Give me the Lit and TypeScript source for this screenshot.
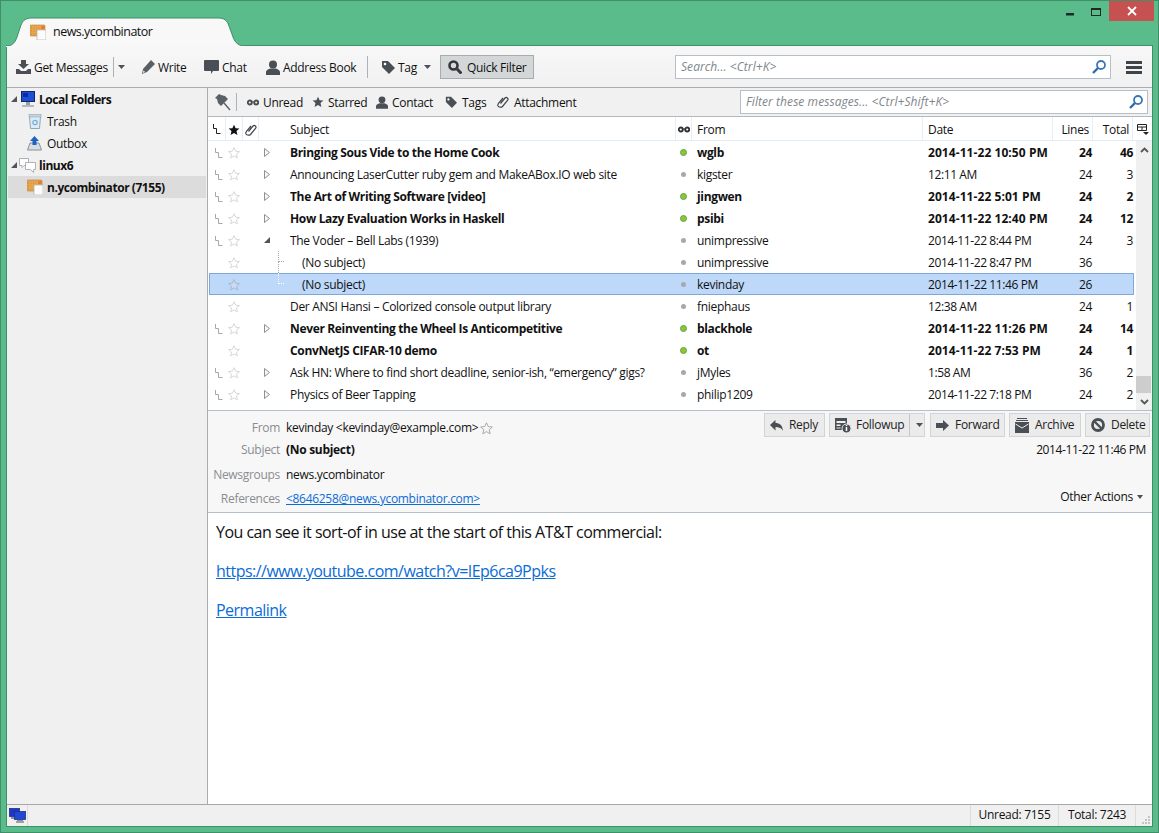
import { LitElement, html, css, svg } from "lit";
import { customElement } from "lit/decorators.js";

const G = "#4a4f55";
const I = (w: number, h: number, body: unknown, cls = "") =>
  html`<svg class="ic ${cls}" width=${w} height=${h} viewBox="0 0 ${w} ${h}">${body}</svg>`;

const icons = {
  download: () => I(15, 14, svg`<path fill=${G} d="M5 0h5v4h3L7.5 9 2 4h3z"/><path fill=${G} d="M0 9h3l2 2h5l2-2h3v5H0z"/>`),
  pencil: () => I(14, 15, svg`<path fill="#5a5f66" d="M10 0l4 4-8 8-5 2 1-5z"/><path fill="#fff" d="M2.5 10.5l1.500 1.500-2 1z"/>`),
  chat: () => I(15, 15, svg`<path fill=${G} d="M1 0h13a1 1 0 0 1 1 1v9a1 1 0 0 1-1 1H9l-2 3v-3H1a1 1 0 0 1-1-1V1a1 1 0 0 1 1-1z"/>`),
  person: (s = 14) => I(s, s + 1, svg`<g transform="scale(${s / 14})"><circle cx="7" cy="4.500" r="4" fill=${G}/><path fill=${G} d="M0 15v-3c0-2 3-3 4-3.500h6c1 .5 4 1.500 4 3.500v3z"/></g>`),
  tag: (s = 14) => I(s, s, svg`<g transform="scale(${s / 14})"><path fill=${G} d="M1 1h6l7 7-6 6-7-7z"/><circle cx="4" cy="4" r="1.300" fill="#fff"/></g>`),
  lens: () => I(14, 14, svg`<circle cx="5.500" cy="5.500" r="4" fill="#d8d8d8" stroke="#33373c" stroke-width="2.600"/><path d="M9 9l4.500 4.500" stroke="#33373c" stroke-width="3"/>`),
  blueLens: () => I(14, 14, svg`<circle cx="9" cy="5" r="4" fill="none" stroke="#3a78b8" stroke-width="1.800"/><path d="M6 8L1 13" stroke="#2f6cab" stroke-width="2.400"/>`),
  menu: () => I(16, 13, svg`<path fill="#3f444a" d="M0 0h16v3H0zM0 5h16v3H0zM0 10h16v3H0z"/>`),
  pin: () => I(16, 17, svg`<path fill="#5b6066" d="M4 0L0 4l2 1 1 4 3 3 7-7-3-3-4-1z"/><path d="M9 9l6 7" stroke="#5b6066" stroke-width="1.400"/>`),
  glasses: (c = "#4a4f55") => I(12, 7, svg`<circle cx="2.800" cy="3.500" r="2" fill="none" stroke=${c} stroke-width="1.900"/><circle cx="9.200" cy="3.500" r="2" fill="none" stroke=${c} stroke-width="1.900"/><path d="M4.500 3h3" stroke=${c}/>`),
  star: (s = 12, f = G, st = "none") => I(s, s, svg`<g transform="scale(${s / 12})"><path fill=${f} stroke=${st} stroke-width=".9" d="M6 .7l1.600 3.500 3.800.4-2.900 2.500.9 3.800L6 8.900l-3.400 2 .9-3.800L.6 4.600l3.800-.4z"/></g>`),
  clip: (s = 12) => I(s, s, svg`<g transform="scale(${s / 12})"><path fill="none" stroke="#3f444a" stroke-width="1.200" d="M3.500 7.500l4.500-5.500c1.500-1.500 4 .5 2.500 2.500l-5 6c-1 1-3.500 1-4.500-.5-.6-1 0-2 .5-2.700L6 2"/></g>`),
  thread: (c = "#a4a8ac") => I(9, 11, svg`<path fill="none" stroke=${c} d="M1.500 0v4.500h3v5h4"/>`),
  twistyOpen: () => I(6, 6, svg`<path fill="#50545a" d="M6 0v6H0z"/>`),
  twistyClosed: () => I(6, 9, svg`<path fill="#f6f6f6" stroke="#8d9196" d="M.5.5l5 4-5 4z"/>`),
  caret: () => I(7, 4, svg`<path fill="#4d5157" d="M0 0h7L3.500 4z"/>`),
  smallCaret: () => I(6, 4, svg`<path fill="#4d5157" d="M0 0h6L3 4z"/>`),
  localFolders: () => I(16, 17, svg`<rect x="1" y="0" width="14" height="11" fill="#16246a"/><rect x="2" y="1" width="12" height="9" fill="#1d4fd6"/><path fill="#0c2aa0" d="M3 2h5v4H3z"/><rect x="6" y="11" width="4" height="3" fill="#9aa0a4"/><rect x="2" y="14" width="12" height="2" fill="#b6babd"/>`),
  trash: () => I(14, 15, svg`<path fill="#dcebf4" stroke="#8fa8b8" d="M1.500 2.500h11l-1 12h-9z"/><rect x="1" y="0.500" width="12" height="2.500" fill="#c4d4de" stroke="#94a8b4" stroke-width=".6"/><circle cx="7" cy="8.500" r="2.200" fill="none" stroke="#6fb2dc" stroke-width="1.200"/>`),
  outbox: () => I(15, 15, svg`<path fill="#d8dde2" stroke="#8a9098" d="M3 7h9l2.500 7H.5z"/><path fill="#1d64c0" d="M7.500 0L12 5H9.500v4h-4V5H3z"/>`),
  news: () => I(16, 16, svg`<rect x="0" y="1" width="15" height="11" rx="1" fill="#e6a64f" stroke="#b9812f" stroke-width=".6"/><path stroke="#c8862f" stroke-width=".8" stroke-dasharray="1 1.500" d="M1 4h13M1 7h13M1 10h9"/><rect x="7" y="6" width="9" height="10" fill="#fbfbfb" stroke="#b6b6b6" stroke-width=".7"/><circle cx="13" cy="3.500" r="1.800" fill="#f0762a"/>`),
  bubbles: () => I(17, 15, svg`<path fill="#fff" stroke="#aeb2b6" d="M.5.5h9v7H5l-2 2v-2H.5z"/><path fill="#fff" stroke="#aeb2b6" d="M6.500 4.500h10v7h-2v3l-3-3h-5z"/>`),
  network: () => I(17, 15, svg`<rect x="0.500" y="0.500" width="10" height="8" fill="#1a38c8" stroke="#223080" stroke-width=".8"/><rect x="2" y="9" width="5" height="2" fill="#8c9094"/><rect x="5.500" y="3.500" width="11" height="8" fill="#1f47d8" stroke="#223080" stroke-width=".8"/><rect x="8" y="12" width="6" height="1" fill="#8c9094"/><rect x="7" y="13" width="8" height="2" fill="#9da1a5"/>`),
  pickColumn: () => I(12, 11, svg`<path fill="none" stroke="#222" d="M.5.5h9v6H.5zM.5 3h9M5 3v3.500"/><path fill="#222" d="M6 8h6l-3 3z"/>`),
  reply: () => I(13, 11, svg`<path fill=${G} d="M5.500 0v3c4 0 7 2 7.500 8-1.500-3-4-4-7.500-4v3.500L0 5z"/>`),
  followup: () => I(16, 15, svg`<path fill=${G} d="M0 0h12v12H0z"/><path fill="#eee" d="M1.500 3h9v2h-9zM1.500 6.500h4v1.500h-4zM1.500 9.500h4v1h-4z"/><circle cx="11.500" cy="10.500" r="4.500" fill=${G} stroke="#eee"/><path stroke="#fff" stroke-width="1.500" d="M11.500 9v4M11.500 7v1"/>`),
  forward: () => I(13, 11, svg`<path fill=${G} d="M7 0l6 5.500-6 5.500V8H0V3h7z"/>`),
  archive: () => I(14, 15, svg`<path fill=${G} d="M2 0h10v1H2zM1 2h12v1H1zM0 4h14v11H0z"/><path fill="none" stroke="#eee" d="M.5 6L7 10l6.500-4"/>`),
  del: () => I(14, 14, svg`<circle cx="7" cy="7" r="5.500" fill="none" stroke=${G} stroke-width="2.800"/><path d="M3 3l8 8" stroke=${G} stroke-width="2.400"/>`),
  grip: () => I(9, 9, svg`<path fill="#c4c4c4" d="M6 0h2v2H6zM3 3h2v2H3zM6 3h2v2H6zM0 6h2v2H0zM3 6h2v2H3zM6 6h2v2H6z"/>`),
};

interface Row { s: string; f: string; d: string; l: string; t: string; b?: boolean; tw?: "c" | "o"; child?: boolean; sel?: boolean; cont?: boolean; noThread?: boolean; }
const rows: Row[] = [
  { s: "Bringing Sous Vide to the Home Cook", f: "wglb", d: "2014-11-22 10:50 PM", l: "24", t: "46", b: true, tw: "c" },
  { s: "Announcing LaserCutter ruby gem and MakeABox.IO web site", f: "kigster", d: "12:11 AM", l: "24", t: "3", tw: "c" },
  { s: "The Art of Writing Software [video]", f: "jingwen", d: "2014-11-22 5:01 PM", l: "24", t: "2", b: true, tw: "c" },
  { s: "How Lazy Evaluation Works in Haskell", f: "psibi", d: "2014-11-22 12:40 PM", l: "24", t: "12", b: true, tw: "c" },
  { s: "The Voder – Bell Labs (1939)", f: "unimpressive", d: "2014-11-22 8:44 PM", l: "24", t: "3", tw: "o" },
  { s: "(No subject)", f: "unimpressive", d: "2014-11-22 8:47 PM", l: "36", t: "", child: true, cont: true, noThread: true },
  { s: "(No subject)", f: "kevinday", d: "2014-11-22 11:46 PM", l: "26", t: "", child: true, sel: true, noThread: true },
  { s: "Der ANSI Hansi – Colorized console output library", f: "fniephaus", d: "12:38 AM", l: "24", t: "1", noThread: true },
  { s: "Never Reinventing the Wheel Is Anticompetitive", f: "blackhole", d: "2014-11-22 11:26 PM", l: "24", t: "14", b: true, tw: "c" },
  { s: "ConvNetJS CIFAR-10 demo", f: "ot", d: "2014-11-22 7:53 PM", l: "24", t: "1", b: true, noThread: true },
  { s: "Ask HN: Where to find short deadline, senior-ish, “emergency” gigs?", f: "jMyles", d: "1:58 AM", l: "36", t: "2", tw: "c" },
  { s: "Physics of Beer Tapping", f: "philip1209", d: "2014-11-22 7:18 PM", l: "24", t: "2", tw: "c" },
];

@customElement("app-root")
export class AppRoot extends LitElement {
  static styles = css`
    :host { display: block; width: 1159px; height: 833px; overflow: hidden; font: 12px/16px "Open Sans", "Noto Sans", sans-serif; letter-spacing: -0.3px; color: #111; }
    * { box-sizing: border-box; }
    .ic { display: block; flex: none; }
    .win { width: 1159px; height: 833px; background: #5abb8b; border: 1px solid #3f9069; display: flex; flex-direction: column; padding: 0 5px 5px 5px; }
    .title { height: 44px; display: flex; align-items: flex-start; flex: none; position: relative; z-index: 1; }
    .tabwrap { position: relative; width: 240px; height: 30px; margin-top: 16px; display: flex; align-items: center; flex: none; }
    .tabshape { position: absolute; left: 0; top: 0; }
    .tabc { position: relative; display: flex; align-items: center; gap: 7px; padding-left: 24px; font-size: 12.500px; letter-spacing: -0.5px; }
    .ctrls { margin-left: auto; display: flex; align-items: flex-start; margin-right: -1px; }
    .ctrl { width: 27px; height: 20px; display: flex; align-items: center; justify-content: center; }
    .ctrl.m { width: 26px; }
    .ctrl.x { background: #c75050; width: 45px; }
    .client { flex: 1; min-height: 0; border: 1px solid #3f9069; display: flex; flex-direction: column; background: #f0f0f0; }
    .tb { height: 42px; flex: none; display: flex; align-items: center; background: linear-gradient(#f7f7f7, #f1f1f1); border-bottom: 1px solid #a9adb1; padding: 1px 0 0 9px; }
    .btn { display: flex; align-items: center; gap: 3px; flex: none; white-space: nowrap; }
    .btn span { padding-top: 2px; }
    .b-get { width: 90px; }
    .vsep { width: 1px; height: 22px; background: #aeb2b6; flex: none; }
    .s1 { margin-left: 7px; height: 20px; }
    .c1 { margin-left: 4px; }
    .b-write { margin-left: 16px; width: 45px; }
    .b-chat { margin-left: 18px; width: 43px; }
    .b-addr { margin-left: 19px; width: 89px; }
    .s2 { margin-left: 12px; height: 22px; }
    .b-tag { margin-left: 13px; width: 37px; }
    .c2 { margin-left: 6px; }
    .qf { height: 24px; width: 94px; margin-left: 9px; padding-left: 7px; background: #d4d7d8; border: 1px solid #a9acae; gap: 5px; }
    .search { height: 24px; background: #fff; border: 1px solid #b6bfc7; display: flex; align-items: center; padding: 0 4px 0 5px; color: #80868c; font-style: italic; justify-content: space-between; flex: none; letter-spacing: 0.07px; }
    .s-main { width: 436px; margin-left: 141px; }
    .b-menu { margin-left: 15px; }
    .main { flex: 1; min-height: 0; display: flex; }
    .side { width: 201px; flex: none; background: #f0f0f0; border-right: 1px solid #a9adb1; }
    .fr { height: 22px; display: flex; align-items: center; padding-left: 4px; }
    .fr span { padding-top: 2px; }
    .fr.b { font-weight: 700; letter-spacing: -0.45px; }
    .fr.top { gap: 3px; }
    .fr.ln { gap: 2px; }
    .fr.ln span { margin-left: 1px; }
    .fr.child { padding-left: 21px; gap: 5px; }
    .fr.ob { padding-left: 20px; }
    .fr.sel { background: #dcdcdc; margin: 0 1px; padding-left: 19px; gap: 4px; }
    .right { flex: 1; min-width: 0; display: flex; flex-direction: column; }
    .qb { height: 29px; flex: none; display: flex; align-items: center; background: #f1f1f1; border-bottom: 1px solid #b5b9bd; padding-left: 7px; }
    .qsep { margin-left: 5px; margin-right: -1px; height: 18px; }
    .qi { display: flex; align-items: center; gap: 4px; margin-left: 11px; flex: none; white-space: nowrap; }
    .qi span { padding-top: 2px; }
    .q1 { width: 54px; }
    .q2 { width: 53px; }
    .q3 { width: 58px; }
    .q4 { width: 41px; }
    .q4 span { margin-left: 1px; }
    .q5 { width: 79px; }
    .q5 span { margin-left: 1px; }
    .qs { width: 408px; margin-left: auto; margin-right: 4px; }
    .list { height: 294px; flex: none; background: #fff; border-bottom: 1px solid #b5bfcc; position: relative; }
    .head { height: 24px; border-bottom: 1px solid #e2ecf7; display: grid; grid-template-columns: 18px 17px 16px 417px 16px 231px 130px 40px 40px 19px; }
    .head > div { display: flex; align-items: center; border-right: 1px solid #e6eef8; padding-top: 2px; min-width: 0; }
    .head > div:last-child { border-right: 0; }
    .hc { justify-content: center; }
    .hs { padding-left: 31px; }
    .ht { padding-left: 5px; }
    .hr { justify-content: flex-end; padding-right: 3px; }
    .row { height: 22px; width: 925px; margin-left: 1px; align-items: stretch; display: grid; grid-template-columns: 17px 17px 16px 417px 16px 231px 130px 40px 41px; }
    .row > div { display: flex; align-items: center; min-width: 0; white-space: nowrap; padding-top: 2px; }
    .row.b { font-weight: 700; letter-spacing: -0.34px; }
    .row.sel { background: #bdd8f8; box-shadow: inset 0 0 0 1px #7fa8d8; }
    .row > .c-thread { padding-left: 5px; }
    .row > .c-star { padding-left: 2px; }
    .c-sub { position: relative; padding-left: 31px; }
    .c-sub.child { padding-left: 43px; }
    .twc { position: absolute; left: 5px; top: 0; bottom: 0; width: 7px; display: flex; align-items: center; }
    .tree { position: absolute; left: 19px; top: 0; width: 6px; height: 11px; border-left: 1px dotted #a8a8a8; border-bottom: 1px dotted #a8a8a8; }
    .tree.cont::after { content: ""; position: absolute; left: -1px; top: 11px; height: 11px; border-left: 1px dotted #a8a8a8; }
    .row.sel .tree { border-color: #fff; }
    .c-from { padding-left: 5px; }
    .c-date { padding-left: 5px; letter-spacing: -0.4px; }
    .row.b .c-date { letter-spacing: 0.07px; }
    .dot { width: 5px; height: 5px; border-radius: 50%; background: #a6a9ac; margin-left: 5px; margin-bottom: 2px; }
    .row.b .dot { width: 7px; height: 7px; margin-left: 4px; background: #8bc53f; border: 1px solid #6aa42c; }
    .c-num { justify-content: flex-end; padding-right: 1px; }
    .sb { position: absolute; right: 0; top: 24px; width: 16px; bottom: 0; background: #f0f0f0; display: flex; flex-direction: column; align-items: center; }
    .sb .ar { height: 17px; display: flex; align-items: center; justify-content: center; flex: none; }
    .sb .sp { flex: 1; }
    .sb .th { width: 15px; height: 17px; background: #cdcdcd; flex: none; margin-right: 1px; }
    .hdr { height: 102px; flex: none; background: #f7f7f7; border-bottom: 1px solid #b5bfcc; display: flex; justify-content: space-between; }
    .grid { display: grid; grid-template-columns: 72px auto; grid-template-rows: 22px 22px 28px 20px; column-gap: 6px; padding-top: 6px; align-content: start; }
    .lb { display: flex; align-items: center; justify-content: flex-end; color: #8a8d90; }
    .vl { display: flex; align-items: center; gap: 2px; white-space: nowrap; }
    .link { color: #0a6cd6; text-decoration: underline; }
    .hd-r { display: flex; flex-direction: column; align-items: flex-end; padding: 2px 2px 0 0; }
    .acts { display: flex; gap: 4px; flex: none; }
    .act { height: 24px; display: flex; align-items: center; gap: 6px; background: #ebebeb; border: 1px solid #d2d4d6; color: #222; padding: 0 0 0 5px; flex: none; white-space: nowrap; }
    .a1 { width: 61px; }
    .a2 { width: 96px; gap: 5px; }
    .a3 { width: 75px; margin-left: 1px; }
    .a4 { width: 72px; }
    .a5 { width: 65px; }
    .act .mid { width: 1px; height: 22px; background: #c4c6c8; flex: none; margin-left: 0; margin-right: 1px; }
    .hdate { margin-top: 5px; padding-right: 4px; flex: none; letter-spacing: -0.4px; }
    .other { margin-top: 31px; padding-right: 7px; display: flex; align-items: center; gap: 4px; flex: none; }
    .body { flex: 1; min-height: 0; background: #fff; padding: 9px 8px; font-size: 16px; line-height: 21px; letter-spacing: -0.52px; }
    .body p { margin: 0 0 18px; }
    .st { height: 22px; flex: none; display: flex; align-items: stretch; background: #f0f0f0; border-top: 1px solid #a8a8a8; }
    .st > div { display: flex; align-items: center; }
    .st .a { width: 21px; padding-left: 2px; border-right: 1px solid #dcdcdc; }
    .st .f { flex: 1; border-right: 1px solid #dcdcdc; }
    .st .u { width: 88px; justify-content: center; border-right: 1px solid #dcdcdc; padding-bottom: 2px; }
    .st .tt { width: 77px; justify-content: center; border-right: 1px solid #dcdcdc; padding-bottom: 2px; }
    .st .g { width: 16px; align-items: flex-end; justify-content: flex-end; padding: 0 1px 1px 0; }
  `;

  private row(r: Row) {
    const star = r.sel ? icons.star(12, "#c9dcf4", "#a6b6c8") : icons.star(12, "#fff", "#d2d2d2");
    return html`<div class="row ${r.b ? "b" : ""} ${r.sel ? "sel" : ""}">
      <div class="c-thread">${r.noThread ? "" : icons.thread()}</div>
      <div class="c-star">${star}</div>
      <div></div>
      <div class="c-sub ${r.child ? "child" : ""}">
        ${r.tw ? html`<span class="twc">${r.tw === "c" ? icons.twistyClosed() : icons.twistyOpen()}</span>` : ""}
        ${r.child ? html`<span class="tree ${r.cont ? "cont" : ""}"></span>` : ""}
        ${r.s}
      </div>
      <div><span class="dot"></span></div>
      <div class="c-from">${r.f}</div>
      <div class="c-date">${r.d}</div>
      <div class="c-num">${r.l}</div>
      <div class="c-num">${r.t}</div>
    </div>`;
  }

  render() {
    return html`<div class="win">
      <div class="title">
        <div class="tabwrap">
          <svg class="tabshape" width="240" height="30" viewBox="0 0 240 30"><path d="M0 29C6 29 9 26 11 20L15 8C17 3 20 1 26 1H212C218 1 221 3 223 9L227 20C229 26 233 29 239 29" fill="#f8f8f8" stroke="#3f9069"/><rect x="0" y="29" width="240" height="1" fill="#f7f7f7"/></svg>
          <div class="tabc">${icons.news()}<span>news.ycombinator</span></div>
        </div>
        <div class="ctrls">
          <div class="ctrl"><svg class="ic" width="10" height="10" viewBox="0 0 10 10"><rect x="1" y="7" width="8" height="2.500" fill="#1d2a26"/></svg></div>
          <div class="ctrl m"><svg class="ic" width="10" height="10" viewBox="0 0 10 10"><rect x=".5" y="2.500" width="9" height="7" fill="none" stroke="#1d2a26"/><rect x="0" y="2" width="10" height="2" fill="#1d2a26"/></svg></div>
          <div class="ctrl x"><svg class="ic" width="10" height="10" viewBox="0 0 10 10"><path d="M1 1l8 8M9 1L1 9" stroke="#fff" stroke-width="1.800"/></svg></div>
        </div>
      </div>
      <div class="client">
        <div class="tb">
          <div class="btn b-get">${icons.download()}<span>Get Messages</span></div>
          <div class="vsep s1"></div>
          <div class="btn c1">${icons.caret()}</div>
          <div class="btn b-write">${icons.pencil()}<span>Write</span></div>
          <div class="btn b-chat">${icons.chat()}<span>Chat</span></div>
          <div class="btn b-addr">${icons.person()}<span>Address Book</span></div>
          <div class="vsep s2"></div>
          <div class="btn b-tag">${icons.tag()}<span>Tag</span></div>
          <div class="btn c2">${icons.caret()}</div>
          <div class="btn qf">${icons.lens()}<span>Quick Filter</span></div>
          <div class="search s-main"><span>Search... &lt;Ctrl+K&gt;</span>${icons.blueLens()}</div>
          <div class="b-menu">${icons.menu()}</div>
        </div>
        <div class="main">
          <div class="side">
            <div class="fr b top">${icons.twistyOpen()}${icons.localFolders()}<span>Local Folders</span></div>
            <div class="fr child">${icons.trash()}<span>Trash</span></div>
            <div class="fr child ob">${icons.outbox()}<span>Outbox</span></div>
            <div class="fr b top ln">${icons.twistyOpen()}${icons.bubbles()}<span>linux6</span></div>
            <div class="fr sel b">${icons.news()}<span>n.ycombinator (7155)</span></div>
          </div>
          <div class="right">
            <div class="qb">
              ${icons.pin()}
              <div class="vsep qsep"></div>
              <div class="qi q1">${icons.glasses()}<span>Unread</span></div>
              <div class="qi q2">${icons.star(12)}<span>Starred</span></div>
              <div class="qi q3">${icons.person(12)}<span>Contact</span></div>
              <div class="qi q4">${icons.tag(12)}<span>Tags</span></div>
              <div class="qi q5">${icons.clip()}<span>Attachment</span></div>
              <div class="search qs"><span>Filter these messages... &lt;Ctrl+Shift+K&gt;</span>${icons.blueLens()}</div>
            </div>
            <div class="list">
              <div class="head">
                <div class="hc">${icons.thread("#222")}</div>
                <div class="hc">${icons.star(12, "#111")}</div>
                <div class="hc">${icons.clip()}</div>
                <div class="hs">Subject</div>
                <div class="hc">${icons.glasses("#333")}</div>
                <div class="ht">From</div>
                <div class="ht">Date</div>
                <div class="hr">Lines</div>
                <div class="hr">Total</div>
                <div class="hc">${icons.pickColumn()}</div>
              </div>
              ${rows.map((r) => this.row(r))}
              <div class="sb">
                <div class="ar"><svg class="ic" width="9" height="6" viewBox="0 0 9 6"><path d="M1 5l3.500-3.500L8 5" fill="none" stroke="#555" stroke-width="1.800"/></svg></div>
                <div class="sp"></div>
                <div class="th"></div>
                <div class="ar"><svg class="ic" width="9" height="6" viewBox="0 0 9 6"><path d="M1 1l3.500 3.500L8 1" fill="none" stroke="#555" stroke-width="1.800"/></svg></div>
              </div>
            </div>
            <div class="hdr">
              <div class="grid">
                <div class="lb">From</div><div class="vl">kevinday &lt;kevinday@example.com&gt;${icons.star(13, "#f7f7f7", "#a8a8a8")}</div>
                <div class="lb">Subject</div><div class="vl"><b>(No subject)</b></div>
                <div class="lb">Newsgroups</div><div class="vl">news.ycombinator</div>
                <div class="lb">References</div><div class="vl"><a class="link" href="#">&lt;8646258@news.ycombinator.com&gt;</a></div>
              </div>
              <div class="hd-r">
                <div class="acts">
                  <div class="act a1">${icons.reply()}<span>Reply</span></div>
                  <div class="act a2">${icons.followup()}<span>Followup</span><span class="mid"></span>${icons.caret()}</div>
                  <div class="act a3">${icons.forward()}<span>Forward</span></div>
                  <div class="act a4">${icons.archive()}<span>Archive</span></div>
                  <div class="act a5">${icons.del()}<span>Delete</span></div>
                </div>
                <div class="hdate">2014-11-22 11:46 PM</div>
                <div class="other"><span>Other Actions</span>${icons.smallCaret()}</div>
              </div>
            </div>
            <div class="body">
              <p>You can see it sort-of in use at the start of this AT&amp;T commercial:</p>
              <p><a class="link" href="#">https://www.youtube.com/watch?v=IEp6ca9Ppks</a></p>
              <p><a class="link" href="#">Permalink</a></p>
            </div>
          </div>
        </div>
        <div class="st">
          <div class="a">${icons.network()}</div>
          <div class="f"></div>
          <div class="u">Unread: 7155</div>
          <div class="tt">Total: 7243</div>
          <div class="g">${icons.grip()}</div>
        </div>
      </div>
    </div>`;
  }
}
